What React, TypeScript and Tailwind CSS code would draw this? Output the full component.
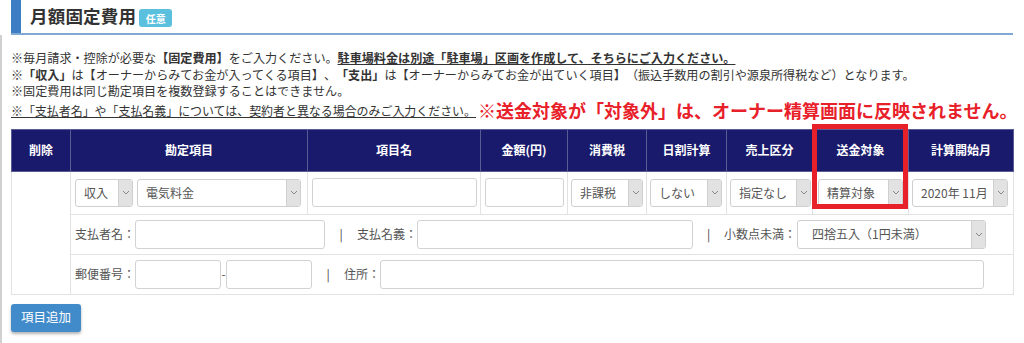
import React from "react";

const FONT = { fontFamily: '"Noto Sans CJK JP", "Noto Sans", sans-serif' };

function Chevron() {
  return (
    <svg width="8" height="5" viewBox="0 0 8 5" fill="none">
      <path d="M1 1l3 3 3-3" stroke="#888" strokeWidth="1" />
    </svg>
  );
}

function Select({ value, className }: { value: string; className: string }) {
  return (
    <div
      className={`flex h-[28px] items-stretch overflow-hidden rounded-[3px] border border-[#cfcfcf] bg-white text-[12px] text-[#555] ${className}`}
    >
      <span className="flex flex-1 items-center truncate pl-[8px]">{value}</span>
      <span className="flex w-[14px] items-center justify-center border-l border-[#cfcfcf] bg-[#e2e2e2]">
        <Chevron />
      </span>
    </div>
  );
}

function Input({ className }: { className: string }) {
  return <div className={`h-[29px] rounded-[3px] border border-[#d2d2d2] bg-white ${className}`} />;
}

const HEADS = ["削除", "勘定項目", "項目名", "金額(円)", "消費税", "日割計算", "売上区分", "送金対象", "計算開始月"];
const WIDTHS = [59, 237, 173, 87, 79, 80, 86, 96, 105];

export default function App() {
  return (
    <div className="relative h-[343px] w-[1024px] overflow-hidden bg-white text-[#333]" style={FONT}>
      <div className="absolute bottom-0 left-0 top-[35px] w-[2px] bg-[#d0d0d0]" />

      <div className="ml-[11px] mr-[11px] flex h-[35px] items-center border-b-2 border-[#80a8d2]">
        <div className="h-full w-[10px] bg-[#3c7dc4]" />
        <h1 className="ml-[9px] text-[17.5px] font-bold tracking-[0.2px] text-[#333]">月額固定費用</h1>
        <span className="ml-[3px] mt-[3px] flex h-[18px] w-[33px] items-center justify-center rounded-[3px] bg-[#5bc0de] text-[10px] font-bold text-white">
          任意
        </span>
      </div>

      <div className="ml-[11px] mt-[15px] text-[12.1px] leading-[16.5px] text-[#333] [text-spacing-trim:space-all]">
        <p>
          ※毎月請求・控除が必要な<b>【固定費用】</b>をご入力ください。
          <b className="underline">駐車場料金は別途「駐車場」区画を作成して、そちらにご入力ください。</b>
        </p>
        <p>
          ※<b>「収入」</b>は【オーナーからみてお金が入ってくる項目】、<b>「支出」</b>
          は【オーナーからみてお金が出ていく項目】（振込手数用の割引や源泉所得税など）となります。
        </p>
        <p>※固定費用は同じ勘定項目を複数登録することはできません。</p>
        <p className="flex items-end whitespace-nowrap leading-[18px]">
          <span className="text-[11.95px] underline">※「支払者名」や「支払名義」については、契約者と異なる場合のみご入力ください。</span>
          <span className="ml-[2px] text-[18px] font-bold leading-[20px] text-[#e8202a]">
            ※送金対象が「対象外」は、オーナー精算画面に反映されません。
          </span>
        </p>
      </div>

      <div className="relative ml-[11px] mt-[9px] w-[1002px]">
        <table className="w-[1002px] table-fixed border-collapse">
          <colgroup>
            {WIDTHS.map((w, i) => (
              <col key={i} style={{ width: w }} />
            ))}
          </colgroup>
          <thead>
            <tr className="h-[42px] bg-[#1a1a6c]">
              {HEADS.map((h) => (
                <th key={h} className="border border-[#5c5c94] text-center text-[12px] font-bold text-white">
                  {h}
                </th>
              ))}
            </tr>
          </thead>
          <tbody className="text-[12px] text-[#555]">
            <tr className="h-[43px]">
              <td rowSpan={3} className="border border-[#e2e2e2]" />
              <td className="border border-[#e2e2e2] px-[4px]">
                <div className="flex gap-[4px]">
                  <Select value="収入" className="w-[58px]" />
                  <Select value="電気料金" className="w-[164px]" />
                </div>
              </td>
              <td className="border border-[#e2e2e2] px-[4px]">
                <Input className="w-[165px]" />
              </td>
              <td className="border border-[#e2e2e2] px-[4px]">
                <Input className="w-[79px]" />
              </td>
              <td className="border border-[#e2e2e2] px-[3px]">
                <Select value="非課税" className="w-[72px]" />
              </td>
              <td className="border border-[#e2e2e2] px-[3px]">
                <Select value="しない" className="w-[72px]" />
              </td>
              <td className="border border-[#e2e2e2] px-[3px]">
                <Select value="指定なし" className="w-[81px]" />
              </td>
              <td className="border border-[#e2e2e2] px-[5px]">
                <Select value="精算対象" className="w-[85px]" />
              </td>
              <td className="border border-[#e2e2e2] px-[3px]">
                <Select value="2020年 11月" className="w-[96px]" />
              </td>
            </tr>
            <tr className="h-[40px]">
              <td colSpan={8} className="border border-[#e2e2e2] pl-[4px]">
                <div className="flex items-center">
                  <span className="w-[60px]">支払者名：</span>
                  <Input className="w-[190px]" />
                  <span className="w-[32px] text-center text-[#444]">|</span>
                  <span className="w-[60px]">支払名義：</span>
                  <Input className="w-[276px]" />
                  <span className="w-[31px] text-center text-[#444]">|</span>
                  <span className="w-[73px]">小数点未満：</span>
                  <Select value="四捨五入（1円未満）" className="w-[189px] !h-[29px] [&>span:first-child]:pl-[14px]" />
                </div>
              </td>
            </tr>
            <tr className="h-[40px]">
              <td colSpan={8} className="border border-[#e2e2e2] pl-[4px]">
                <div className="flex items-center">
                  <span className="w-[60px]">郵便番号：</span>
                  <Input className="w-[86px]" />
                  <span className="w-[5px] text-center">-</span>
                  <Input className="w-[86px]" />
                  <span className="w-[32px] text-center text-[#444]">|</span>
                  <span className="w-[36px]">住所：</span>
                  <Input className="w-[604px]" />
                </div>
              </td>
            </tr>
          </tbody>
        </table>

        <div className="absolute left-[801px] top-[-5px] h-[85px] w-[96px] border-[5px] border-[#e8202a]" />
      </div>

      <button className="ml-[11px] mt-[9px] flex h-[28px] w-[70px] items-center justify-center rounded-[3px] bg-[#428bca] text-[12.5px] text-white shadow-[0_2px_3px_rgba(0,0,0,0.3)]">
        項目追加
      </button>
    </div>
  );
}
